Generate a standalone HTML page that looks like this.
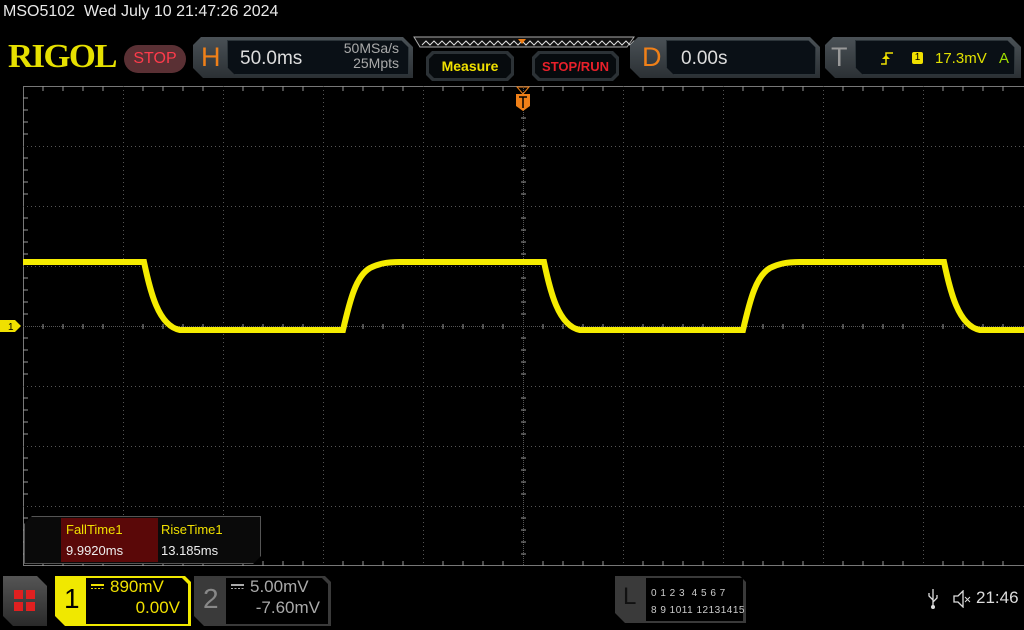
<!DOCTYPE html>
<html><head><meta charset="utf-8"><style>
*{margin:0;padding:0;box-sizing:border-box}
body{width:1024px;height:630px;background:#000;overflow:hidden;position:relative;font-family:"Liberation Sans",sans-serif;color:#ddd}
.a{position:absolute}
.outer{background:linear-gradient(#4a5156,#2b3034);clip-path:polygon(8px 0,calc(100% - 10px) 0,100% 10px,100% 100%,10px 100%,0 calc(100% - 10px),0 8px)}
.inner{background:#0a1016;border:1px solid #2c3439;clip-path:polygon(8px 0,calc(100% - 8px) 0,100% 8px,100% 100%,8px 100%,0 calc(100% - 8px),0 0)}
.btn{background:#2c3236;clip-path:polygon(6px 0,calc(100% - 6px) 0,100% 6px,100% calc(100% - 6px),calc(100% - 6px) 100%,6px 100%,0 calc(100% - 6px),0 6px)}
.btni{position:absolute;left:3px;top:3px;right:3px;bottom:3px;background:#070b0e;clip-path:polygon(5px 0,calc(100% - 5px) 0,100% 5px,100% calc(100% - 5px),calc(100% - 5px) 100%,5px 100%,0 calc(100% - 5px),0 5px);display:flex;align-items:center;justify-content:center;font-weight:bold;font-size:14px}
</style></head><body>
<div class="a" style="left:3px;top:3px;font-size:16px;color:#e8e8e8">MSO5102&nbsp; Wed July 10 21:47:26 2024</div>
<div class="a" style="left:8px;top:38px;font-family:'Liberation Serif',serif;font-weight:bold;font-size:34px;color:#e6e000;letter-spacing:-1.5px;transform:scaleX(1.02);transform-origin:left">RIGOL</div>
<div class="a" style="left:124px;top:45px;width:62px;height:28px;border-radius:14px;background:#5a3034;color:#ff3b4b;font-size:16px;text-align:center;line-height:28px">STOP</div>
<!-- H -->
<div class="a outer" style="left:193px;top:37px;width:220px;height:41px"></div>
<div class="a" style="left:201px;top:42px;font-size:27px;color:#f08018">H</div>
<div class="a inner" style="left:227px;top:40px;width:182px;height:35px"></div>
<div class="a" style="left:240px;top:48px;font-size:19px;color:#ddd">50.0ms</div>
<div class="a" style="left:333px;top:41px;font-size:14px;color:#aaa;line-height:15px;text-align:right;width:66px">50MSa/s<br>25Mpts</div>
<!-- timeline strip -->
<svg class="a" style="left:412px;top:36px" width="224" height="14"><path d="M2,1 L222,1 L215,11 L8,11 Z" fill="#111" stroke="#aaa" stroke-width="1"/><path d="M10,9 l4,-4 l4,4 l4,-4 l4,4 l4,-4 l4,4 l4,-4 l4,4 l4,-4 l4,4 l4,-4 l4,4 l4,-4 l4,4 l4,-4 l4,4 l4,-4 l4,4 l4,-4 l4,4 l4,-4 l4,4 l4,-4 l4,4 l4,-4 l4,4 l4,-4 l4,4 l4,-4 l4,4 l4,-4 l4,4 l4,-4 l4,4 l4,-4 l4,4 l4,-4 l4,4 l4,-4 l4,4 l4,-4 l4,4 l4,-4 l4,4 l4,-4 l4,4 l4,-4 l4,4 l4,-4 l4,4 l4,-4 l4,4 l4,-4 l4,4" fill="none" stroke="#ddd" stroke-width="1"/><path d="M106,3 L114,3 L110,8Z" fill="#f08018"/></svg>
<div class="a btn" style="left:426px;top:51px;width:88px;height:30px"><div class="btni" style="color:#f0e000">Measure</div></div>
<div class="a btn" style="left:532px;top:51px;width:87px;height:30px"><div class="btni" style="color:#e8202a;font-size:13px">STOP/RUN</div></div>
<!-- D -->
<div class="a outer" style="left:630px;top:37px;width:190px;height:41px"></div>
<div class="a" style="left:642px;top:42px;font-size:27px;color:#f08018">D</div>
<div class="a inner" style="left:666px;top:40px;width:150px;height:35px"></div>
<div class="a" style="left:681px;top:48px;font-size:19px;color:#ddd">0.00s</div>
<!-- T -->
<div class="a outer" style="left:825px;top:37px;width:196px;height:41px"></div>
<div class="a" style="left:831px;top:42px;font-size:27px;color:#999">T</div>
<div class="a inner" style="left:855px;top:40px;width:160px;height:35px"></div>
<svg class="a" style="left:880px;top:50px" width="14" height="16"><path d="M1,14 H6 V3 H13" fill="none" stroke="#f0e000" stroke-width="1.5"/><path d="M2,9 L6,5 L10,9Z" fill="#f0e000"/></svg>
<div class="a" style="left:912px;top:52px;width:11px;height:12px;background:#f0e000;color:#000;font-size:10px;text-align:center;line-height:12px;border-radius:2px">1</div>
<div class="a" style="left:935px;top:50px;font-size:15px;color:#e0e000">17.3mV</div>
<div class="a" style="left:999px;top:50px;font-size:15px;color:#a0e000">A</div>
<!-- grid + wave -->
<svg class="a" style="left:0;top:0" width="1024" height="630">
<g stroke="#777" stroke-width="1" fill="none">
<path d="M23.5,86 V566 M23,86.5 H1024 M23,565.5 H1024"/>
<path d="M123.5,86V566M223.5,86V566M323.5,86V566M423.5,86V566M623.5,86V566M723.5,86V566M823.5,86V566M923.5,86V566" stroke-dasharray="1,3" stroke="#555"/>
<path d="M23,146.5H1024M23,206.5H1024M23,266.5H1024M23,386.5H1024M23,446.5H1024M23,506.5H1024" stroke-dasharray="1,3" stroke="#555"/>
<path d="M23,326.5H1024M523.5,86V566" stroke="#555" stroke-dasharray="1,1"/>
</g>
<g stroke="#999" stroke-width="1">
<path d="M43,86v5M63,86v5M83,86v5M103,86v5M143,86v5M163,86v5M183,86v5M203,86v5M243,86v5M263,86v5M283,86v5M303,86v5M343,86v5M363,86v5M383,86v5M403,86v5M443,86v5M463,86v5M483,86v5M503,86v5M543,86v5M563,86v5M583,86v5M603,86v5M643,86v5M663,86v5M683,86v5M703,86v5M743,86v5M763,86v5M783,86v5M803,86v5M843,86v5M863,86v5M883,86v5M903,86v5M943,86v5M963,86v5M983,86v5M1003,86v5"/>
<path d="M43,566v-5M63,566v-5M83,566v-5M103,566v-5M143,566v-5M163,566v-5M183,566v-5M203,566v-5M243,566v-5M263,566v-5M283,566v-5M303,566v-5M343,566v-5M363,566v-5M383,566v-5M403,566v-5M443,566v-5M463,566v-5M483,566v-5M503,566v-5M543,566v-5M563,566v-5M583,566v-5M603,566v-5M643,566v-5M663,566v-5M683,566v-5M703,566v-5M743,566v-5M763,566v-5M783,566v-5M803,566v-5M843,566v-5M863,566v-5M883,566v-5M903,566v-5M943,566v-5M963,566v-5M983,566v-5M1003,566v-5"/>
<path d="M23,98h5M23,110h5M23,122h5M23,134h5M23,158h5M23,170h5M23,182h5M23,194h5M23,218h5M23,230h5M23,242h5M23,254h5M23,278h5M23,290h5M23,302h5M23,314h5M23,338h5M23,350h5M23,362h5M23,374h5M23,398h5M23,410h5M23,422h5M23,434h5M23,458h5M23,470h5M23,482h5M23,494h5M23,518h5M23,530h5M23,542h5M23,554h5"/>
<path d="M43,324v5M63,324v5M83,324v5M103,324v5M143,324v5M163,324v5M183,324v5M203,324v5M243,324v5M263,324v5M283,324v5M303,324v5M343,324v5M363,324v5M383,324v5M403,324v5M443,324v5M463,324v5M483,324v5M503,324v5M543,324v5M563,324v5M583,324v5M603,324v5M643,324v5M663,324v5M683,324v5M703,324v5M743,324v5M763,324v5M783,324v5M803,324v5M843,324v5M863,324v5M883,324v5M903,324v5M943,324v5M963,324v5M983,324v5M1003,324v5"/>
<path d="M521,106h5M521,118h5M521,130h5M521,146h5M521,158h5M521,170h5M521,182h5M521,194h5M521,218h5M521,230h5M521,242h5M521,254h5M521,278h5M521,290h5M521,302h5M521,314h5M521,338h5M521,350h5M521,362h5M521,374h5M521,398h5M521,410h5M521,422h5M521,434h5M521,458h5M521,470h5M521,482h5M521,494h5M521,518h5M521,530h5M521,542h5M521,554h5"/>
</g>
<path d="M23,262 L144,262 C150,290 158,326 180,330 L343,330 C350,300 356,276 370,268 C378,264 386,262 400,262 L544,262 C550,290 558,326 580,330 L743,330 C750,300 756,276 770,268 C778,264 786,262 800,262 L944,262 C950,290 958,326 980,330 L1024,330" fill="none" stroke="#f5ec00" stroke-width="6"/>
<path d="M0,320 H15 L21,326 L15,332 H0Z" fill="#f0e000"/>
<text x="8" y="330" font-size="10" fill="#000" font-family="Liberation Sans">1</text>
<path d="M517,87 L529,87 L523,94Z" fill="none" stroke="#f08018"/>
<path d="M516,94 H530 V106 L523,111 L516,106Z" fill="#f08018"/>
<path d="M519,97 H527 M523,97 V108" stroke="#000" stroke-width="1.5"/>
</svg>
<!-- measure panel -->
<div class="a" style="left:24px;top:516px;width:237px;height:48px;background:#0a0a0a;border:1px solid #555;clip-path:polygon(8px 0,100% 0,100% calc(100% - 8px),calc(100% - 8px) 100%,0 100%,0 8px)"></div>
<div class="a" style="left:61px;top:518px;width:97px;height:44px;background:#5a0808"></div>
<div class="a" style="left:66px;top:522px;font-size:13px;color:#f0e000">FallTime1</div>
<div class="a" style="left:66px;top:543px;font-size:13px;color:#eee">9.9920ms</div>
<div class="a" style="left:161px;top:522px;font-size:13px;color:#f0e000">RiseTime1</div>
<div class="a" style="left:161px;top:543px;font-size:13px;color:#eee">13.185ms</div>
<!-- bottom -->
<div class="a" style="left:3px;top:576px;width:44px;height:50px;background:linear-gradient(#555,#2a2a2a);clip-path:polygon(0 0,calc(100% - 10px) 0,100% 10px,100% 100%,10px 100%,0 calc(100% - 10px))"></div>
<div class="a" style="left:14px;top:590px;width:9px;height:9px;background:#e02020"></div>
<div class="a" style="left:26px;top:590px;width:9px;height:9px;background:#e02020"></div>
<div class="a" style="left:14px;top:602px;width:9px;height:9px;background:#e02020"></div>
<div class="a" style="left:26px;top:602px;width:9px;height:9px;background:#e02020"></div>
<div class="a" style="left:55px;top:576px;width:136px;height:50px;background:#f0e800;clip-path:polygon(0 0,calc(100% - 6px) 0,100% 6px,100% 100%,10px 100%,0 calc(100% - 10px))"></div>
<div class="a" style="left:86px;top:578px;width:102px;height:46px;background:#000;clip-path:polygon(0 0,calc(100% - 6px) 0,100% 6px,100% 100%,0 100%)"></div>
<div class="a" style="left:64px;top:583px;font-size:28px;color:#000">1</div>
<svg class="a" style="left:91px;top:584px" width="14" height="6"><path d="M0,1H13" stroke="#f0e000" stroke-width="2"/><path d="M0,4.5H13" stroke="#f0e000" stroke-dasharray="2,1.5"/></svg>
<div class="a" style="left:110px;top:577px;font-size:17px;color:#f0e000">890mV</div>
<div class="a" style="left:100px;top:598px;width:80px;text-align:right;font-size:17px;color:#f0e000">0.00V</div>
<div class="a" style="left:194px;top:576px;width:137px;height:50px;background:#3a3a3a;clip-path:polygon(0 0,calc(100% - 6px) 0,100% 6px,100% 100%,10px 100%,0 calc(100% - 10px))"></div>
<div class="a" style="left:226px;top:578px;width:102px;height:46px;background:#000;clip-path:polygon(0 0,calc(100% - 6px) 0,100% 6px,100% 100%,0 100%)"></div>
<div class="a" style="left:203px;top:583px;font-size:28px;color:#888">2</div>
<svg class="a" style="left:231px;top:584px" width="14" height="6"><path d="M0,1H13" stroke="#aaa" stroke-width="2"/><path d="M0,4.5H13" stroke="#aaa" stroke-dasharray="2,1.5"/></svg>
<div class="a" style="left:250px;top:577px;font-size:17px;color:#aaa">5.00mV</div>
<div class="a" style="left:240px;top:598px;width:80px;text-align:right;font-size:17px;color:#aaa">-7.60mV</div>
<div class="a" style="left:615px;top:576px;width:131px;height:47px;background:#3a3a3a;clip-path:polygon(0 0,calc(100% - 6px) 0,100% 6px,100% 100%,10px 100%,0 calc(100% - 10px))"></div>
<div class="a" style="left:646px;top:578px;width:97px;height:43px;background:#000"></div>
<div class="a" style="left:623px;top:583px;font-size:24px;color:#111">L</div>
<div class="a" style="left:651px;top:585px;font-size:10px;color:#ccc;letter-spacing:0.5px;line-height:17px;white-space:pre">0 1 2 3  4 5 6 7
8 9 1011 12131415</div>
<svg class="a" style="left:926px;top:588px" width="14" height="22"><path d="M7,1 V19 M7,12 L3,8 V5 M7,14 L11,10 V7" stroke="#ddd" fill="none" stroke-width="1.3"/><circle cx="7" cy="19" r="2" fill="#ddd"/></svg>
<svg class="a" style="left:952px;top:590px" width="20" height="18"><path d="M2,6 H6 L11,1 V17 L6,12 H2Z" fill="none" stroke="#ddd" stroke-width="1.3"/><path d="M13,7 L18,12 M18,7 L13,12" stroke="#ddd"/></svg>
<div class="a" style="left:976px;top:588px;font-size:17px;color:#ddd">21:46</div>
</body></html>
